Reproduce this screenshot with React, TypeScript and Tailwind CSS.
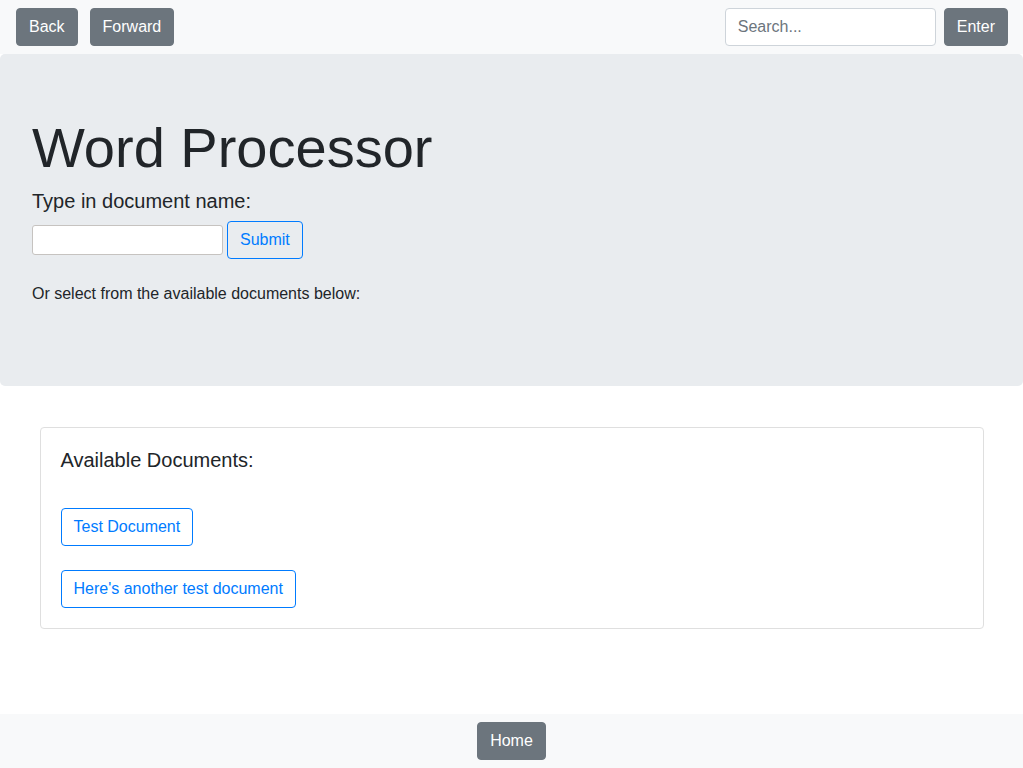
const font = { fontFamily: '"Liberation Sans", Arial, sans-serif' };

function GrayButton({ label }: { label: string }) {
    return (
        <button className="h-[38px] px-3 rounded-[4px] bg-[#6c757d] border border-[#6c757d] text-white text-base leading-6">
            {label}
        </button>
    );
}

function OutlineButton({ label }: { label: string }) {
    return (
        <button className="h-[38px] px-3 rounded-[4px] border border-[#007bff] text-[#007bff] text-base leading-6 bg-transparent">
            {label}
        </button>
    );
}

export default function App() {
    const documents = ["Test Document", "Here's another test document"];

    return (
        <div className="min-h-[768px] flex flex-col bg-white text-[#212529]" style={font}>
            <nav className="h-[54px] bg-[#f8f9fa] flex items-center justify-between pl-4 pr-[15px]">
                <div className="flex gap-3">
                    <GrayButton label="Back" />
                    <GrayButton label="Forward" />
                </div>
                <div className="flex gap-2">
                    <input
                        className="w-[211px] h-[38px] px-3 rounded-[4px] border border-[#ced4da] bg-white text-base placeholder:text-[#6c757d] outline-none"
                        placeholder="Search..."
                    />
                    <GrayButton label="Enter" />
                </div>
            </nav>

            <div className="bg-[#e9ecef] rounded-[5px] px-8 pt-16 pb-20">
                <h1 className="text-[56px] leading-[60px] font-light">Word Processor</h1>
                <h5 className="text-[20px] leading-6 mt-[11px]">Type in document name:</h5>
                <div className="flex items-center gap-1 mt-2">
                    <input className="w-[191px] h-[30px] px-1 rounded-[3px] border border-[#c6c3c0] bg-white outline-none" />
                    <OutlineButton label="Submit" />
                </div>
                <p className="text-base leading-6 mt-[23px]">
                    Or select from the available documents below:
                </p>
            </div>

            <div className="mt-[41px] w-[944px] mx-auto border border-[#dfdfdf] rounded-[4px] p-5">
                <h5 className="text-[20px] leading-6">Available Documents:</h5>
                <div className="mt-9 flex flex-col items-start gap-6">
                    {documents.map((name) => (
                        <OutlineButton key={name} label={name} />
                    ))}
                </div>
            </div>

            <footer className="mt-auto h-[54px] bg-[#f8f9fa] flex items-center justify-center">
                <GrayButton label="Home" />
            </footer>
        </div>
    );
}
